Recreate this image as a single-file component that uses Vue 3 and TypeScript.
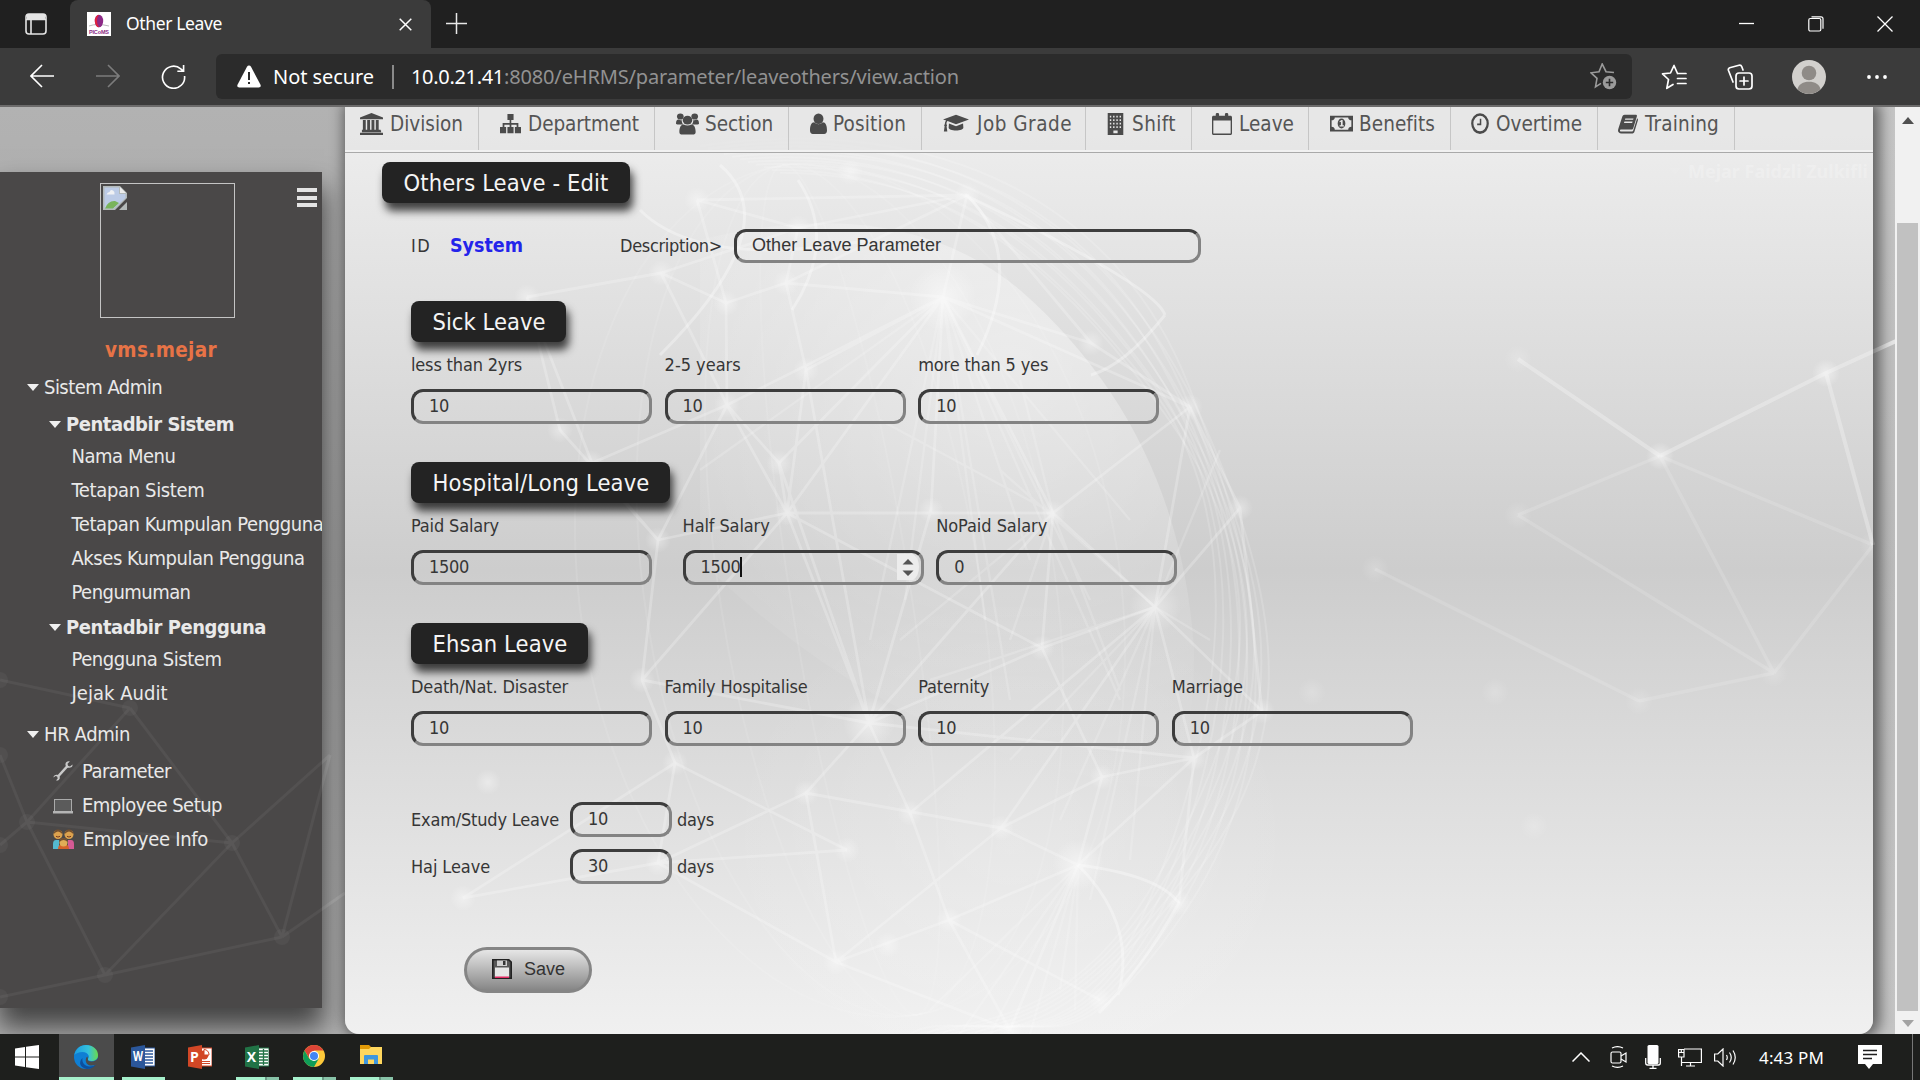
<script setup lang="ts">
interface NavItem { label: string; icon: string; iw: number; w: number; pad: number; gap: number; tw: number }
interface Field { label: string; value: string; tw: number; vw: number; gap: number; focus?: boolean }
interface Section { title: string; tw: number; bw: number; fields: Field[] }

const vFit = {
  mounted(el: HTMLElement, binding: { value: number }) {
    const count = (el.textContent || '').length
    const natural = el.getBoundingClientRect().width
    el.style.letterSpacing = ((binding.value - natural) / count).toFixed(3) + 'px'
  },
}

const navIcons: Record<string, string> = {
  bank: '<path d="M12 0 24 5v2H0V5zM2 20h20v2H2zM0 22.500h24V25H0zM3 8h3v11h1.500V8h3v11h1.500V8h3v11h1.500V8h3v11h2v1H2v-1h1z"/>',
  sitemap: '<path d="M8.500 1h7v7h-2.600v3.500H21v4.500h3v7h-7v-7h2v-2.700h-6V16h2.500v7h-7v-7H11v-2.700H5V16h2v7H0v-7h3v-4.500h8V8H8.500z"/>',
  users: '<circle cx="4.500" cy="4" r="3.500"/><circle cx="19.500" cy="4" r="3.500"/><circle cx="12" cy="8" r="5"/><path d="M0 12c0-3 1-4.500 2.500-4.500 1 .8 2 1 3.500.8 0 2 .3 3.500 1.500 4.700H1.500C.6 13 0 12.700 0 12zM24 12c0-3-1-4.500-2.500-4.500-1 .8-2 1-3.500.8 0 2-.3 3.500-1.500 4.700h6c.9 0 1.500-.3 1.500-1zM3.500 21.500c0-5 1.600-8.500 4.500-8.500 2.500 1.700 5.500 1.700 8 0 2.900 0 4.500 3.500 4.500 8.500 0 2-1.200 3-3 3h-11c-1.800 0-3-1-3-3z"/>',
  user: '<ellipse cx="12" cy="6.500" rx="7" ry="6"/><path d="M0 20c0-6 2-9.500 6-9.500 3.500 3 8.500 3 12 0 4 0 6 3.500 6 9.500 0 2.500-1.600 4-4 4H4c-2.400 0-4-1.500-4-4z"/>',
  cap: '<path d="M12 2 24 7.300 12 12.700 4.200 9.200c-.7.800-1 2-1 3.600.6.600.7 1.500.1 2.200L4 21H.8l.7-6c-.6-.7-.5-1.600.2-2.200 0-1.700.4-3 1.200-4.200L0 7.300zM5.500 12l6.500 3 6.500-3 .3 4.500c0 2-3 3.500-6.800 3.500s-6.800-1.500-6.800-3.500z"/>',
  building: '<path fill-rule="evenodd" d="M1 0h22v25H1zM4 3v2h2V3zm4.600 0v2h2V3zm4.600 0v2h2V3zm4.600 0v2h2V3zM4 7v2h2V7zm4.600 0v2h2V7zm4.600 0v2h2V7zm4.600 0v2h2V7zM4 11v2h2v-2zm4.600 0v2h2v-2zm4.600 0v2h2v-2zm4.600 0v2h2v-2zM4 15v2h2v-2zm4.600 0v2h2v-2zm4.600 0v2h2v-2zm4.600 0v2h2v-2zM9 20v3h6v-3z"/>',
  calendar: '<path fill-rule="evenodd" d="M2 3h2.500V1.500C4.500.5 5.300 0 6.500 0s2 .5 2 1.500V3h7V1.500c0-1 .8-1.500 2-1.500s2 .5 2 1.500V3H22c1.300 0 2 .7 2 2v18c0 1.300-.7 2-2 2H2c-1.300 0-2-.7-2-2V5c0-1.300.7-2 2-2zm-.4 5.500v14.900h20.800V8.500z"/>',
  money: '<path fill-rule="evenodd" d="M0 3h24v18H0zM5 5c0 2-1.400 3.300-3.300 3.300v7.400C3.600 15.700 5 17 5 19h14c0-2 1.400-3.300 3.300-3.300V8.300C20.400 8.300 19 7 19 5z"/><ellipse cx="12" cy="12" rx="4" ry="5.700"/><path d="M10 9.500 12 8h1.200v6h1.300v1.300H10V14h1.400v-4l-1.400.5z" fill="#e7e7e7"/>',
  clock: '<circle cx="12" cy="12" r="10.300" fill="none" stroke="#4b4b4b" stroke-width="3"/><path d="M11.700 6.500h2v7.300H8.200v-2h3.500z"/>',
  book: '<path fill-rule="evenodd" d="M8 2h13c1.500 0 2 .7 1.600 2l-4.200 13c-.4 1.200-1.200 1.800-2.400 1.800H4c-1.300 0-1.800.6-1.600 1.300.2.700.9 1 2 1h12c1 0 1.700-.5 2-1.400L23 6c1 .6 1.200 1.500.8 2.600l-4 12.300c-.5 1.500-1.600 2.400-3.200 2.400H4C1.600 23.300 0 22 0 20c0-.8.300-1.500.6-2.600L5 4.500C5.600 2.800 6.500 2 8 2zm.8 4.200-.5 1.600h9.800l.5-1.600zm-1.100 3.600-.5 1.500H17l.5-1.500z"/>',
}

const nav: NavItem[] = [
  { label: 'Division', icon: 'bank', iw: 23, w: 134, pad: 15, gap: 7, tw: 73 },
  { label: 'Department', icon: 'sitemap', iw: 21, w: 176, pad: 21, gap: 7, tw: 111 },
  { label: 'Section', icon: 'users', iw: 23, w: 134, pad: 21, gap: 6, tw: 68 },
  { label: 'Position', icon: 'user', iw: 17, w: 133, pad: 21, gap: 6, tw: 73 },
  { label: 'Job Grade', icon: 'cap', iw: 26, w: 164, pad: 21, gap: 8, tw: 95 },
  { label: 'Shift', icon: 'building', iw: 17, w: 106, pad: 21, gap: 8, tw: 44 },
  { label: 'Leave', icon: 'calendar', iw: 20, w: 117, pad: 20, gap: 7, tw: 55 },
  { label: 'Benefits', icon: 'money', iw: 23, w: 142, pad: 21, gap: 6, tw: 76 },
  { label: 'Overtime', icon: 'clock', iw: 18, w: 147, pad: 20, gap: 7, tw: 86 },
  { label: 'Training', icon: 'book', iw: 20, w: 137, pad: 20, gap: 7, tw: 74 },
]

const sections: Section[] = [
  {
    title: 'Sick Leave', tw: 113, bw: 155, fields: [
      { label: 'less than 2yrs', value: '10', tw: 111, vw: 20, gap: 0 },
      { label: '2-5 years', value: '10', tw: 76, vw: 20, gap: 12.6 },
      { label: 'more than 5 yes', value: '10', tw: 130, vw: 20, gap: 12.6 },
    ],
  },
  {
    title: 'Hospital/Long Leave', tw: 217, bw: 259, fields: [
      { label: 'Paid Salary', value: '1500', tw: 88, vw: 40, gap: 0 },
      { label: 'Half Salary', value: '1500', tw: 87, vw: 40, gap: 30.6, focus: true },
      { label: 'NoPaid Salary', value: '0', tw: 111, vw: 10, gap: 12.6 },
    ],
  },
  {
    title: 'Ehsan Leave', tw: 135, bw: 177, fields: [
      { label: 'Death/Nat. Disaster', value: '10', tw: 157, vw: 20, gap: 0 },
      { label: 'Family Hospitalise', value: '10', tw: 143, vw: 20, gap: 12.6 },
      { label: 'Paternity', value: '10', tw: 71, vw: 20, gap: 12.6 },
      { label: 'Marriage', value: '10', tw: 71, vw: 20, gap: 12.6 },
    ],
  },
]

const extra = [
  { label: 'Exam/Study Leave', tw: 148, value: '10' },
  { label: 'Haj Leave', tw: 79, value: '30' },
]

const systemMenu = [
  { label: 'Nama Menu', tw: 104 },
  { label: 'Tetapan Sistem', tw: 133 },
  { label: 'Tetapan Kumpulan Pengguna', tw: 252 },
  { label: 'Akses Kumpulan Pengguna', tw: 233 },
  { label: 'Pengumuman', tw: 119 },
]
const userMenu = [
  { label: 'Pengguna Sistem', tw: 150 },
  { label: 'Jejak Audit', tw: 96 },
]

/* Network drawn behind the page: node positions and the links between them. */
type P = [number, number]
const nodes: P[] = [
  [967, 195], [943, 297], [798, 228], [697, 200], [661, 273], [726, 303], [786, 283], [527, 297], [727, 405], [787, 513],
  [1091, 343], [1190, 407], [806, 370], [658, 540], [1053, 513], [931, 510], [592, 463], [779, 463], [869, 723], [675, 763],
  [806, 793], [1001, 828], [1078, 865], [836, 962], [910, 813], [949, 920], [463, 898], [847, 850], [658, 863], [1042, 648],
  [1155, 607], [642, 680], [1179, 903], [1102, 777], [488, 782], [1240, 508], [1262, 711], [1194, 758], [888, 945], [850, 172],
  [560, 430], [1010, 1030], [1100, 1000],
]
const links: [number, number][] = [
  [0, 2], [0, 3], [0, 6], [0, 10], [2, 4], [2, 6], [2, 3], [3, 5], [4, 7], [4, 5], [5, 6], [6, 1], [5, 8], [6, 12],
  [1, 8], [1, 12], [1, 9], [1, 14], [1, 15], [1, 10], [1, 11], [1, 0], [7, 16], [8, 16], [8, 9], [8, 17], [9, 13], [9, 14],
  [9, 17], [9, 18], [9, 31], [10, 11], [11, 35], [11, 14], [12, 9], [13, 31], [14, 30], [14, 29], [15, 18], [17, 18], [16, 13],
  [18, 29], [18, 20], [18, 24], [18, 37], [18, 31], [19, 26], [19, 28], [19, 27], [20, 21], [20, 23], [21, 22], [21, 33],
  [22, 25], [22, 37], [22, 33], [23, 25], [23, 41], [24, 25], [26, 28], [28, 27], [29, 30], [29, 33], [30, 35], [30, 36], [30, 37],
  [30, 21], [32, 37], [33, 37], [35, 36], [36, 37], [31, 19], [13, 40], [7, 40], [25, 42], [29, 9], [28, 23], [20, 28],
  [21, 23], [12, 18], [1, 17], [8, 13], [30, 11], [30, 24], [14, 18], [4, 8], [22, 41], [25, 41],
]
/* Thin threads that fan out of the brightest hubs. */
const fans: [number, P[]][] = [
  [1, [[870, 640], [905, 600], [985, 620], [1030, 560], [1090, 600], [1130, 520], [700, 470], [1120, 700], [1010, 700]]],
  [30, [[1000, 470], [1090, 900], [1060, 820], [1010, 760], [1130, 860], [930, 680], [1210, 640], [1220, 450]]],
  [22, [[960, 1034], [990, 1034], [1030, 1034], [1060, 990], [930, 1010], [1075, 1010]]],
  [14, [[880, 420], [900, 640], [1010, 640], [1120, 690], [1020, 380]]],
]
const farNodes: P[] = [[1826, 373], [1660, 456], [1518, 359], [1518, 515], [1774, 673], [1873, 545], [1375, 569], [1639, 701], [1534, 826], [1312, 692], [1920, 330], [1495, 692]]
const brightLinks: [number, number][] = [[0, 1], [0, 5], [0, 10], [1, 2]]
const farLinks: [number, number][] = [[1, 3], [1, 4], [1, 5], [3, 4], [4, 5], [6, 7], [4, 7]]
const leftNodes: P[] = [[130, 708], [27, 822], [232, 843], [105, 975], [282, 937], [330, 755], [0, 680], [0, 755], [0, 997], [0, 845], [345, 893]]
const leftLinks: [number, number][] = [[6, 0], [0, 1], [0, 2], [7, 1], [9, 1], [1, 2], [1, 3], [3, 2], [3, 4], [8, 3], [2, 4], [2, 5], [5, 4], [4, 10]]
const join = (pts: P[], ls: [number, number][]) => ls.map(([a, b]) => `M${pts[a]}L${pts[b]}`).join('')
const linkPath = join(nodes, links)
const fanPath = fans.map(([n, ends]) => ends.map((e) => `M${nodes[n]}L${e}`).join('')).join('')
const brightPath = join(farNodes, brightLinks)
const farPath = join(farNodes, farLinks)
const leftPath = join(leftNodes, leftLinks)
const rim = Array.from({ length: 11 }, (_, i) => {
  const d = i * 8
  const s = i % 2 ? 12 : -8
  return `M${700 + d} ${146 + d / 3}C${940 - s} ${110 + d * 0.8} ${1120 - d} ${210 + d / 2} ${1196 - d / 2 + s} ${400 + s * 2}S${1300 - d} ${750 + s} ${1184 - d / 2} ${905 - s}S${1040 - d} ${1010 + s} ${990 - d} 1034`
})
const meridians = [60, 130, 205, 270]
</script>

<template>
  <div class="screen">
    <header class="titlebar">
      <div class="tabs-btn">
        <svg width="22" height="22" viewBox="0 0 22 22" fill="none" stroke="#e4e4e4" stroke-width="1.600"><rect x="1" y="1" width="20" height="20" rx="3" /><path d="M1 6.500h20M6 6v15" /><path d="M2 3.500h18" stroke-width="5" /></svg>
      </div>
      <div class="tab">
        <svg class="favicon" width="24" height="24" viewBox="0 0 24 24"><rect width="24" height="24" fill="#fff" /><path d="M2 14q8-3 20 0" stroke="#bbb" fill="none" /><ellipse cx="12" cy="9" rx="4.200" ry="6.300" fill="#8c2a86" /><path d="M12 2.700a4.200 6.300 0 0 0 0 12.600 7 9 0 0 1 0-12.600" fill="#e0213f" /><text x="12" y="21.500" text-anchor="middle" font-size="5.500" font-weight="700" font-family="Liberation Sans, sans-serif" fill="#8c2a86" textLength="20">PICoMS</text></svg>
        <span v-fit="96" class="tab-title">Other Leave</span>
        <svg class="tab-close" width="13" height="13" viewBox="0 0 13 13" stroke="#fff" stroke-width="1.500"><path d="M.7.7 12.300 12.300M12.300.7.7 12.300" /></svg>
      </div>
      <svg class="plus" width="21" height="21" viewBox="0 0 21 21" stroke="#e8e8e8" stroke-width="1.500"><path d="M10.500 0v21M0 10.500h21" /></svg>
      <div class="win">
        <svg width="16" height="16" viewBox="0 0 16 16" stroke="#fff" stroke-width="1.300"><path d="M0 7.500h15" /></svg>
        <svg width="16" height="16" viewBox="0 0 16 16" fill="none" stroke="#fff" stroke-width="1.200"><rect x=".8" y="2.500" width="12" height="12.500" rx="1.500" /><path d="M3.500.8H13q2 0 2 2v10" /></svg>
        <svg width="16" height="16" viewBox="0 0 16 16" stroke="#fff" stroke-width="1.300"><path d="M.5.5l15 15M15.500.5l-15 15" /></svg>
      </div>
    </header>

    <div class="toolbar">
      <div class="history">
        <svg width="24" height="24" viewBox="0 0 24 24" fill="none" stroke="#fff" stroke-width="1.600"><path d="M24 12H1M12 1 1 12l11 11" /></svg>
        <svg width="24" height="24" viewBox="0 0 24 24" fill="none" stroke="#7c7c7c" stroke-width="1.600"><path d="M0 12h23M12 1l11 11-11 11" /></svg>
        <svg width="25" height="25" viewBox="0 0 26 26" fill="none" stroke="#fff" stroke-width="1.700"><path d="M24.500 12.500A11.500 11.500 0 1 1 20.500 5l3 2.500M23.500 1v6.500H17" /></svg>
      </div>
      <div class="address">
        <svg width="24" height="23" viewBox="0 0 24 23"><path d="M12 .5q1.300 0 2 1.300l9.500 18q1 2.700-1.800 2.700H2.300q-2.800 0-1.800-2.700l9.500-18Q10.700.5 12 .5z" fill="#fff" /><path d="M12 7v8M12 17v2" stroke="#2b2b2b" stroke-width="2" /></svg>
        <span v-fit="101" class="secure">Not secure</span>
        <i class="addr-sep"></i>
        <span v-fit="93" class="host">10.0.21.41</span><span v-fit="455" class="path">:8080/eHRMS/parameter/leaveothers/view.action</span>
        <svg class="addr-star" width="27" height="27" viewBox="0 0 27 27" fill="none" stroke="#9b9b9b" stroke-width="1.600"><path d="M24 9.500l-8-.8L12.200 1 9 8.700 1 9.800l6 5.600-1.500 8.500 5.500-3.500" /><circle cx="19.500" cy="19.500" r="6.700" fill="#9b9b9b" stroke="none" /><path d="M19.500 15.800v7.400M15.800 19.500h7.400" stroke="#2b2b2b" /></svg>
      </div>
      <div class="tools">
        <svg width="26" height="26" viewBox="0 0 26 26" fill="none" stroke="#fff" stroke-width="1.700" stroke-linejoin="round" stroke-linecap="round"><path d="M16.500 9.500 13 1.500 9.500 9 1.500 9.900l6 5.600-1.700 8.800L12 20.500M16.500 9.500H25M16.500 14.500H25M16.500 19.500H25" /></svg>
        <svg width="26" height="26" viewBox="0 0 26 26" fill="none" stroke="#fff" stroke-width="1.700" stroke-linejoin="round" stroke-linecap="round"><rect x="9" y="9" width="16" height="16" rx="3" /><path d="M17 13v8M13 17h8M6 18 1.500 6.500q-.7-2 1.200-2.700L12 1.300q2-.5 2.700 1.200L16 6" /></svg>
        <svg width="34" height="34" viewBox="0 0 34 34"><circle cx="17" cy="17" r="17" fill="#d2d0cd" /><circle cx="17" cy="13" r="7.300" fill="#8f8b87" /><path d="M5.500 29.300c1-5 5.500-7.600 11.500-7.600s10.500 2.600 11.500 7.600A17 17 0 0 1 17 34a17 17 0 0 1-11.500-4.700z" fill="#8f8b87" /></svg>
        <svg width="22" height="6" viewBox="0 0 22 6" fill="#fff"><circle cx="3" cy="3" r="1.900" /><circle cx="11" cy="3" r="1.900" /><circle cx="19" cy="3" r="1.900" /></svg>
      </div>
    </div>

    <div class="viewport">
      <svg class="net" viewBox="0 107 1895 927" width="1895" height="927">
        <path :d="leftPath" stroke="#fff" stroke-opacity=".16" stroke-width="3" fill="none" />
        <path :d="brightPath" stroke="#fff" stroke-opacity=".6" stroke-width="4" fill="none" />
      </svg>

      <aside class="sidebar">
        <svg class="net" viewBox="0 172 322 836" width="322" height="836">
          <g stroke="#fff" fill="#fff"><path :d="leftPath" stroke-opacity=".05" stroke-width="3" fill="none" /><circle v-for="(n, i) in leftNodes" :key="i" :cx="n[0]" :cy="n[1]" r="8" fill-opacity=".04" stroke="none" /></g>
        </svg>
        <div class="side-head">
          <div class="photo">
            <svg width="24" height="24" viewBox="0 0 24 24"><path d="M0 0h17l7 7v5L12 24H0zM24 16v8h-8z" fill="#b3b9b9" /><path d="M1.500 1.500h14.500V8h6.500v4L11 22.500H1.500z" fill="#bccbe6" /><path d="M2 22.500q3-8 10-7.500l4 2-6 5.500z" fill="#79b45c" /><path d="M3.500 8.500q1-2.500 3-2.500 1-3 3.500-1.500 2 1 1.500 4z" fill="#f0f1f4" /><path d="M17 1v6h6z" fill="#ececec" /></svg>
          </div>
          <div class="burger"><i></i><i></i><i></i></div>
        </div>
        <div class="account"><span v-fit="112">vms.mejar</span></div>
        <div class="root"><i class="caret"></i><span v-fit="118">Sistem Admin</span></div>
        <div class="group"><i class="caret"></i><span v-fit="168">Pentadbir Sistem</span></div>
        <ul class="leafs"><li v-for="m in systemMenu" :key="m.label"><span v-fit="m.tw">{{ m.label }}</span></li></ul>
        <div class="group"><i class="caret"></i><span v-fit="200">Pentadbir Pengguna</span></div>
        <ul class="leafs"><li v-for="m in userMenu" :key="m.label"><span v-fit="m.tw">{{ m.label }}</span></li></ul>
        <div class="root second"><i class="caret"></i><span v-fit="86">HR Admin</span></div>
        <ul class="apps">
          <li><svg width="20" height="20" viewBox="0 0 20 20"><path d="M5 15.500 14.500 5" stroke="#c9c9c9" stroke-width="2.600" /><path d="M19.500 3.500 17 5.500l-2-.7-.5-2L16.800.5c-2.300-.5-4 .5-4.300 2.300-.2 1.300.1 2.200 1 3.200 1.300 1 2.500 1 3.800.6 1.600-.5 2.400-1.600 2.200-3.100zM.5 16.500l2-1.500 1.700.5.500 2L3 19.500c2 .3 3.300-.5 3.700-2 .3-1.200 0-2-.7-2.800-1-1-2.200-1-3.400-.6-1.300.4-2.100 1.200-2.100 2.400z" fill="#c9c9c9" /></svg><span v-fit="89">Parameter</span></li>
          <li><svg width="20" height="20" viewBox="0 0 20 20"><rect x="1.500" y="4.500" width="17" height="12" fill="#5b5b5b" stroke="#aaa" /><path d="M0 16h20v2.500H0z" fill="#b4b4b4" /></svg><span v-fit="140">Employee Setup</span></li>
          <li><svg width="21" height="21" viewBox="0 0 21 21"><path d="M0 20v-5q0-4 3-4h3v9z" fill="#54b9cf" /><path d="M21 20v-5q0-4-3-4h-3v9z" fill="#d45a94" /><circle cx="5" cy="5.500" r="4.500" fill="#dca24e" /><circle cx="16" cy="5.500" r="4.500" fill="#dca24e" /><path d="M.7 5Q1 .5 5 .5T9.300 5Q7 2.500 5 2.500T.7 5zM11.700 5Q12 .5 16 .5T20.300 5Q18 2.500 16 2.500T11.700 5z" fill="#74502f" /><path d="M5 20q0-5 5.500-5t5.500 5z" fill="#d4632b" /><circle cx="10.500" cy="13.500" r="4" fill="#e1ad57" /><path d="M6.500 13q0-4 4-4t4 4q-2-2-4-2t-4 2z" fill="#74502f" /><path d="M3 7.300q2 1.500 4 0M14 7.300q2 1.500 4 0" stroke="#7a3b1d" fill="none" /></svg><span v-fit="125">Employee Info</span></li>
        </ul>
      </aside>

      <main class="panel">
        <svg class="net" viewBox="345 107 1528 927" width="1528" height="927">
          <defs>
            <radialGradient id="hub"><stop offset="0" stop-color="#fff" stop-opacity=".5" /><stop offset="1" stop-color="#fff" stop-opacity="0" /></radialGradient>
            <radialGradient id="lens" gradientUnits="userSpaceOnUse" cx="1010" cy="360" r="400"><stop offset="0" stop-color="#fff" stop-opacity=".42" /><stop offset="1" stop-color="#fff" stop-opacity=".02" /></radialGradient>
          </defs>
          <path d="M700 240Q900 190 1020 290Q1180 430 1194 650Q1194 740 1170 790Q900 760 700 560z" fill="url(#lens)" />
          <ellipse cx="1010" cy="850" rx="290" ry="260" fill="url(#hub)" opacity=".4" />
          <g fill="none" stroke="#fff">
            <path v-for="(d, i) in rim" :key="i" :d="d" stroke-opacity=".16" stroke-width="2" />
            <g stroke-opacity=".1" stroke-width="2">
              <ellipse v-for="m in meridians" :key="m" cx="850" cy="590" :rx="m" ry="430" transform="rotate(-9 850 590)" />
            </g>
            <path :d="linkPath" stroke-opacity=".23" stroke-width="2.800" />
            <path :d="fanPath" stroke-opacity=".17" stroke-width="2.400" />
            <path d="M720 165q70 60-60 190M798 180q40 60-6 130M640 210q60 60 230 30M967 195q60 60 10 160M1078 865q80 10 101 38-40 70-80 110M1078 865q60 60 40 130M1165 315q-40 50-74 60M1165 315q-10 -30 -200-120" stroke-opacity=".32" stroke-width="3" />
            <path :d="brightPath" stroke-opacity=".28" stroke-width="4" />
            <path :d="farPath" stroke-opacity=".14" stroke-width="3.500" />
          </g>
          <circle v-for="(n, i) in nodes" :key="i" :cx="n[0]" :cy="n[1]" :r="i === 1 ? 34 : i === 18 || i === 22 || i === 30 ? 26 : 13" fill="url(#hub)" :opacity="i === 1 || i === 18 || i === 22 ? 1 : .75" />
          <circle v-for="(n, i) in farNodes" :key="'f' + i" :cx="n[0]" :cy="n[1]" r="14" fill="url(#hub)" :opacity="i < 2 ? 1 : .35" />
        </svg>

        <nav class="menu">
          <div v-for="n in nav" :key="n.label" class="menu-item" :style="{ width: n.w + 'px', paddingLeft: n.pad + 'px', gap: n.gap + 'px' }">
            <svg :width="n.iw" height="22" viewBox="0 0 24 25" preserveAspectRatio="none" fill="#4b4b4b" v-html="navIcons[n.icon]"></svg>
            <span v-fit="n.tw">{{ n.label }}</span>
          </div>
        </nav>

        <div class="ghost"><i class="caret"></i><span v-fit="180">Mejar Faidzli Zulkifli</span></div>
        <h1 class="badge title"><span v-fit="205">Others Leave - Edit</span></h1>

        <form class="form" @submit.prevent>
          <div class="id-row">
            <span v-fit="20" class="id">ID</span>
            <b v-fit="73" class="sys">System</b>
            <span v-fit="102" class="desc">Description&gt;</span>
            <div class="box wide"><span v-fit="189">Other Leave Parameter</span></div>
          </div>

          <section v-for="s in sections" :key="s.title" class="section">
            <h2 class="badge" :style="{ width: s.bw + 'px' }"><span v-fit="s.tw">{{ s.title }}</span></h2>
            <div class="fields">
              <div v-for="f in s.fields" :key="f.label" class="field" :style="{ marginLeft: f.gap + 'px' }">
                <label><span v-fit="f.tw">{{ f.label }}</span></label>
                <div class="box">
                  <span v-fit="f.vw">{{ f.value }}</span>
                  <template v-if="f.focus">
                    <i class="cursor"></i>
                    <svg class="spin" width="22" height="26" viewBox="0 0 22 26"><path d="M0 0h16q6 4 6 13t-6 13H0z" fill="#ececec" /><path d="M5.500 10.500 11 5l5.500 5.500zM5.500 16.500 11 22l5.500-5.500z" fill="#555" /></svg>
                  </template>
                </div>
              </div>
            </div>
          </section>

          <div class="extras">
            <div v-for="e in extra" :key="e.label" class="extra">
              <div class="extra-label"><span v-fit="e.tw">{{ e.label }}</span></div>
              <div class="box small"><span v-fit="20">{{ e.value }}</span></div>
              <span v-fit="37" class="days">days</span>
            </div>
          </div>

          <button class="save" type="button">
            <svg width="20" height="20" viewBox="0 0 20 20"><path d="M.8.8h16L19.200 3v16.200H.8z" fill="#565656" stroke="#222" stroke-width="1.600" /><path d="M5 1.500h10V7H5z" fill="#cfcfcf" /><path d="M11 2h2.500v4H11z" fill="#333" /><path d="M3 8.500h14V19H3z" fill="#e6e6e6" /><path d="M3 17.500h14V19H3z" fill="#e22a63" /></svg>
            <span v-fit="41">Save</span>
          </button>
        </form>
      </main>

      <div class="scrollbar">
        <svg width="12" height="7" viewBox="0 0 12 7"><path d="M0 7 6 0l6 7z" fill="#505050" /></svg>
        <div class="thumb"></div>
        <svg width="12" height="7" viewBox="0 0 12 7"><path d="M0 0l6 7 6-7z" fill="#a3a3a3" /></svg>
      </div>
    </div>

    <footer class="taskbar">
      <div class="start"><svg width="24" height="24" viewBox="0 0 24 24" fill="#fff"><path d="M0 3.500 10 2v9.500H0zM11 1.800 24 0v11.500H11zM0 12.500h10V22L0 20.500zM11 12.500h13V24l-13-1.800z" /></svg></div>
      <div class="task active">
        <svg width="24" height="24" viewBox="0 0 24 24"><defs><linearGradient id="ed" x1="0" x2="1"><stop offset="0" stop-color="#1b9de2" /><stop offset=".6" stop-color="#35c1dc" /><stop offset="1" stop-color="#6bdc4a" /></linearGradient></defs><circle cx="12" cy="12" r="12" fill="#0f7fd4" /><path d="M.3 10C1.500 4 6 0 12 0c7 0 12 4.500 12 10 0 4-3 6-6.500 6-3 0-4-1-3.700-2 1-1 1.200-2 .9-3.200C14 8.500 11.500 7 8.500 7 5 7 1.500 8.500.3 10z" fill="url(#ed)" /><path d="M8.500 13c-1 4.500 2.500 8.500 7 8.500 3 0 5-.8 7-2.500C20 22.500 16.500 24 13 24c-6-1-9.500-6-4.500-11z" fill="#0c4f9e" /><path d="M14 14c-.6 1.500.6 2.500 3.500 2.500 3 0 5.300-1.300 6.500-3.500v6h-1q-3 2-6.500 1.500c-3.500-.5-5.500-3.500-4.500-7 .3-1 .7-1.500 1.500-2z" fill="#4b4b4b" /></svg>
      </div>
      <div class="task open"><svg width="24" height="24" viewBox="0 0 24 24"><path d="M13 3h11v18H13z" fill="#fff" stroke="#2b579a" /><path d="M14 6h8M14 9h8M14 12h8M14 15h8M14 18h8" stroke="#2b579a" stroke-width="1.300" /><path d="M0 2.500 14 0v24L0 21.500z" fill="#2b579a" /><text x="7" y="16.300" text-anchor="middle" textLength="10" lengthAdjust="spacingAndGlyphs">W</text></svg></div>
      <div class="task"><svg width="24" height="24" viewBox="0 0 24 24"><path d="M13 3h11v18H13z" fill="#fff" stroke="#d24726" /><circle cx="16" cy="10" r="4.500" fill="#d24726" /><path d="M16 10V4.500a5 5 0 0 1 5 5.500z" fill="#fff" stroke="#d24726" /><path d="M14 16.500h8M14 18.500h8" stroke="#d24726" /><path d="M0 2.500 14 0v24L0 21.500z" fill="#d24726" /><text x="6.500" y="16.800" text-anchor="middle">P</text></svg></div>
      <div class="task multi"><svg width="24" height="24" viewBox="0 0 24 24"><path d="M13 3h11v18H13z" fill="#fff" stroke="#217346" /><path d="M14 6h9M14 9h9M14 12h9M14 15h9M14 18h9M18.500 4v16" stroke="#217346" stroke-width="1.300" /><path d="M0 2.500 14 0v24L0 21.500z" fill="#217346" /><text x="6.500" y="16.800" text-anchor="middle">X</text></svg></div>
      <div class="task multi"><svg width="22" height="22" viewBox="0 0 22 22"><circle cx="11" cy="11" r="11" fill="#fdc93a" /><path d="M1.500 5.500A11 11 0 0 1 20.500 5.500H11L6.500 13.500z" fill="#db4437" /><path d="M1.500 5.500A11 11 0 0 0 11 22l4.700-8.300H6.300z" fill="#0f9d58" /><circle cx="11" cy="11" r="5" fill="#fff" /><circle cx="11" cy="11" r="4" fill="#4285f4" /></svg></div>
      <div class="task multi"><svg width="22" height="20" viewBox="0 0 22 20"><path d="M0 0h9l2 2v3H0z" fill="#e19a06" /><path d="M0 4h9l2-2h11v17H0z" fill="#ffd75e" /><path d="M4 11q0-1 1-1h12q1 0 1 1v8h-4v-4.500H8V19H4z" fill="#3f97dd" /></svg></div>

      <div class="tray">
        <svg width="18" height="10" viewBox="0 0 18 10" fill="none" stroke="#fff" stroke-width="1.500"><path d="M.5 9.500 9 1l8.500 8.500" /></svg>
        <svg width="17" height="22" viewBox="0 0 17 22" fill="none" stroke="#fff" stroke-width="1.200"><rect x="1" y="6" width="10" height="11" rx="1.500" /><path d="M11 10l5-3v9l-5-3M2 2Q7.500-.8 13 2M2 20q5.500 2.800 11 0" /></svg>
        <svg width="16" height="24" viewBox="0 0 16 24"><rect x="2.500" y="0" width="11" height="19" rx="1.500" fill="#fff" /><path d="M.7 13v5q0 2 2 2h10.600q2 0 2-2v-5M8 20v3.300M4.500 23.300h7" stroke="#fff" stroke-width="1.300" fill="none" /></svg>
        <svg width="24" height="19" viewBox="0 0 24 19" fill="none" stroke="#fff" stroke-width="1.200"><path d="M6 1h17.400v13.500H4M12.500 14.500v3.500M8 18h9M.6 1.500H6V9H.6zM.6 4.500H6M3.300 1.500v3M3.500 9v9" /></svg>
        <svg width="23" height="19" viewBox="0 0 23 19" fill="none" stroke="#fff" stroke-width="1.200"><path d="M.6 6h3.200L9 1v17l-5.200-5H.6zM12.500 7q1.500 2.500 0 5M15.500 4.500q3.500 5 0 10M19 2.500q4.500 7 0 14" /></svg>
        <span v-fit="65" class="time">4:43 PM</span>
        <svg width="24" height="24" viewBox="0 0 24 24"><path d="M0 0h24v19h-9l-4 5-4-5H0z" fill="#fff" /><path d="M5 5.500h14M5 9.500h14M5 13.500h9" stroke="#1e1e1e" stroke-width="1.300" /></svg>
        <i class="desk"></i>
      </div>
    </footer>
  </div>
</template>

<style>
body { margin: 0; overflow: hidden; }
</style>

<style scoped>
* { box-sizing: border-box; }
svg { display: block; flex: none; }
ul, h1, h2 { margin: 0; padding: 0; list-style: none; font-weight: 400; }
span, b { display: inline-block; white-space: pre; flex: none; }
.screen { width: 1920px; height: 1080px; display: flex; flex-direction: column; overflow: hidden; font-family: "DejaVu Sans Condensed", "DejaVu Sans", sans-serif; font-stretch: condensed; }

.titlebar { height: 48px; flex: none; background: #202020; display: flex; color: #fff; font-family: "Noto Sans", "Open Sans", sans-serif; }
.tabs-btn { width: 70px; padding: 13px 0 0 25px; }
.tab { width: 361px; background: #3b3b3b; border-radius: 8px 8px 0 0; display: flex; align-items: flex-start; padding: 12px 19px 0 17px; }
.tab-title { font-size: 17.500px; line-height: 23px; margin-left: 15px; }
.tab-close { margin: 6px 0 0 auto; }
.plus { margin: 13px 0 0 15px; }
.win { margin-left: auto; padding: 16px 27px 0 0; display: flex; gap: 53px; }

.toolbar { height: 59px; flex: none; background: #3b3b3b; border-bottom: 2px solid #6c6b6b; display: flex; padding-top: 6px; font-family: "Noto Sans", "Open Sans", sans-serif; }
.history { width: 216px; display: flex; gap: 42px; padding: 10px 0 0 30px; }
.history svg:last-child { margin-left: -1px; }
.address { width: 1416px; height: 45px; background: #2b2b2b; border-radius: 6px; display: flex; align-items: center; padding: 0 15px 0 21px; font-size: 20px; color: #fff; }
.secure { margin-left: 12px; }
.addr-sep { width: 2px; height: 24px; background: #8a8a8a; margin: 0 17px 0 18px; }
.path { color: #929292; }
.addr-star { margin-left: auto; }
.tools { display: flex; align-items: center; height: 45px; gap: 40px; padding-left: 29px; }
.tools svg:nth-child(3) { margin-left: -1px; }

.viewport { height: 927px; flex: none; position: relative; display: flex; overflow: hidden; background: linear-gradient(90deg, transparent 1800px, rgba(255, 255, 255, .25) 1880px), linear-gradient(#b2b2b2, #a4a4a4 50%, #b2b2b2); }
.net { position: absolute; left: 0; top: 0; z-index: -1; pointer-events: none; }
.viewport > .net { z-index: 0; }

.sidebar { width: 322px; height: 836px; margin-top: 65px; flex: none; position: relative; isolation: isolate; overflow: visible; background: #4a4848; box-shadow: 0 18px 26px 2px rgba(0, 0, 0, .62); color: #e9e9e9; font-size: 20px; }
.side-head { display: flex; height: 146px; padding: 11px 5px 0 100px; justify-content: space-between; }
.photo { width: 135px; height: 135px; border: 1px solid #c4c4c4; padding: 2px; }
.burger { width: 20px; padding-top: 5px; display: flex; flex-direction: column; gap: 3.500px; }
.burger i { height: 4px; background: #e4e4e4; }
.account { height: 50px; line-height: 50px; margin-top: 7px; padding-left: 105px; font-weight: 700; color: #e77346; font-size: 20.500px; padding-bottom: 0; margin-bottom: -7px; }
.caret { width: 0; height: 0; border: 6px solid transparent; border-top: 7px solid #f0f0f0; border-bottom: 0; flex: none; }
.root { height: 38px; display: flex; align-items: center; padding-left: 27px; gap: 5px; }
.root.second { margin-top: 5px; }
.group { height: 36px; display: flex; align-items: center; padding-left: 49px; gap: 5px; font-weight: 700; }
.leafs { margin: -3px 0 0; padding-left: 71.500px; overflow: hidden; }
.leafs li, .apps li { height: 34px; line-height: 34px; }
.apps { padding: 1px 0 0 53px; }
.apps li { display: flex; align-items: center; }
.apps span { margin-left: 9px; }

.panel { width: 1528px; margin-left: 23px; flex: none; position: relative; isolation: isolate; background: linear-gradient(#efefef, #cdcdcd 50%, #f0f0f0); border-radius: 0 0 14px 14px; box-shadow: 3px 0 14px 4px rgba(0, 0, 0, .5); color: #363636; }
.menu { height: 46px; display: flex; background: rgba(228, 228, 228, .7); border-bottom: 1px solid #a9a9a9; box-shadow: inset 0 -2px #f1f1f1; color: #555; font-size: 20.500px; }
.menu-item { height: 43px; flex: none; border-right: 1px solid #c6c6c6; display: flex; align-items: center; padding-bottom: 9px; }
.ghost { position: absolute; left: 1324px; top: 51px; height: 26px; display: flex; align-items: center; gap: 7px; color: #fff; opacity: .22; font-weight: 700; font-size: 18px; font-family: "Noto Sans", sans-serif; }
.badge { height: 41px; line-height: 43px; padding-left: 21.500px; border-radius: 8px; background: #232323; color: #f5f5f5; font-size: 23.500px; box-shadow: 3px 8px 9px rgba(0, 0, 0, .72); }
.title { width: 248px; margin: 9px 0 0 37px; }
.form { padding: 26px 0 0 66px; font-size: 18px; }
.id-row { height: 34px; display: flex; align-items: center; }
.id { padding-bottom: 1px; }
.sys { margin-left: 19px; color: #2424ea; font-size: 19.500px; padding-bottom: 1px; }
.desc { margin-left: 97px; padding-bottom: 1px; }
.box { height: 35px; width: 241px; border: 3px solid; border-color: #3d3d3d #838383 #838383 #3d3d3d; border-radius: 12px; display: flex; align-items: center; padding: 0 0 3px 15px; position: relative; }
.box.wide { width: 467px; height: 34px; margin-left: 12px; padding: 0 0 2px 15px; font-family: "Liberation Sans", Arial, sans-serif; }
.section { padding-top: 38px; }
.fields { display: flex; }
.field { flex: none; width: 241px; }
.field label { display: block; height: 47px; line-height: 45px; }
.cursor { width: 2px; height: 20px; background: #111; margin: 1px 0 0 -1px; }
.spin { position: absolute; right: 2px; top: 1px; }
.extras { padding-top: 56px; display: flex; flex-direction: column; gap: 12px; }
.extra { height: 35px; display: flex; align-items: center; }
.extra-label { width: 159px; }
.extra .box { width: 102px; }
.days { margin-left: 5px; padding-bottom: 1px; }
.save { margin: 63px 0 0 53px; width: 128px; height: 46px; border: 3px solid #858585; border-radius: 23px; background: linear-gradient(#e6e6e6, #868686); display: flex; align-items: center; padding: 0 0 2px 25px; gap: 12px; font: 18px "Liberation Sans", Arial, sans-serif; color: #333; }

.scrollbar { width: 25px; height: 927px; margin-left: auto; flex: none; background: #f1f1f1; position: relative; display: flex; flex-direction: column; align-items: center; padding-top: 10px; }
.thumb { width: 21px; height: 788px; background: #c1c1c1; margin: 99px 0 9px; }

.taskbar { height: 46px; flex: none; background: #1e1f1d; display: flex; color: #fff; position: relative; }
.start { width: 59px; padding: 11px 0 0 15px; }
.task { width: 55px; height: 46px; margin-right: 2px; padding: 11px 2px 0 0; display: flex; justify-content: center; align-items: flex-start; position: relative; }
.task text { font: 700 14px "Open Sans", "Noto Sans", sans-serif; fill: #fff; }
.active { background: #4b4b4b; box-shadow: inset 0 -3px #a6f0cc; }
.open, .multi { background: linear-gradient(#a6f0cc, #a6f0cc) 6px 43px / 43px 3px no-repeat; }
.multi { background: linear-gradient(90deg, #a6f0cc 29px, #6a9a85 29px, #6a9a85 31px, #88c3a8 31px) 6px 43px / 43px 3px no-repeat; }
.tray { margin-left: auto; height: 46px; display: flex; align-items: center; font-family: "Noto Sans", "Open Sans", sans-serif; font-size: 17px; }
.tray svg { margin-right: 18px; }
.tray svg:nth-child(1) { margin-right: 20px; }
.tray svg:nth-child(4) { margin-right: 12px; margin-left: -1px; }
.tray svg:nth-child(5) { margin-right: 22px; }
.time { margin-right: 34px; }
.tray svg:nth-of-type(6) { margin-right: 30px; }
.desk { width: 8px; height: 46px; border-left: 1px solid #777; }
</style>
